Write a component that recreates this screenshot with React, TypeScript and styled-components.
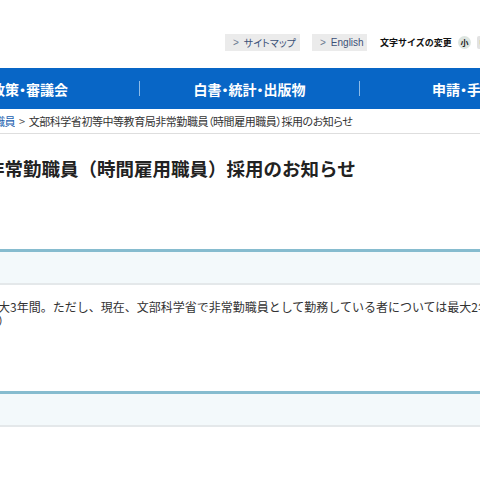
import styled, { createGlobalStyle } from "styled-components";

const GlobalStyle = createGlobalStyle`
    html, body {
        margin: 0;
        padding: 0;
        background: #ffffff;
        overflow: hidden;
    }
    body {
        font-family: "Noto Sans CJK JP", "Noto Sans", sans-serif;
        color: #333333;
    }
`;

// the page is wider than the window and starts left of it
const Frame = styled.div`
    width: 1100px;
    margin-left: -300px;
`;

const Header = styled.header`
    display: flex;
    align-items: center;
    height: 68px;
    box-sizing: border-box;
    padding: 34px 0 17px 525px;
`;

const HeadButton = styled.a<{ $width: number }>`
    display: flex;
    align-items: center;
    box-sizing: border-box;
    width: ${(p) => p.$width}px;
    height: 17px;
    padding-left: 8px;
    margin-right: 12px;
    background: #ebebeb;
    color: #3b5178;
    font-size: 10px;
    font-feature-settings: "palt";
    white-space: nowrap;
    text-decoration: none;
    font-family: "Liberation Sans", "Noto Sans CJK JP", sans-serif;
    flex-shrink: 0;
`;

const Chevron = styled.span`
    margin-right: 5px;
    color: #6b7a90;
`;

const SizeLabel = styled.span`
    margin-left: 1px;
    font-size: 9px;
    font-weight: bold;
    color: #111111;
    width: 70px;
    white-space: nowrap;
    flex-shrink: 0;
`;

const SizeButton = styled.span<{ $active?: boolean }>`
    display: flex;
    align-items: center;
    justify-content: center;
    width: 13px;
    height: 13px;
    margin-left: ${(p) => (p.$active ? 8 : 6)}px;
    border-radius: ${(p) => (p.$active ? "50%" : "2px")};
    background: ${(p) => (p.$active ? "#dde5e0" : "#e2e2e2")};
    font-size: 8px;
    font-weight: bold;
    color: #222222;
    flex-shrink: 0;
`;

const NavBar = styled.nav`
    display: flex;
    align-items: center;
    height: 41px;
    background: #0866c6;
`;

const NavItem = styled.a`
    display: flex;
    align-items: center;
    justify-content: center;
    width: 219px;
    height: 15px;
    flex-shrink: 0;
    color: #ffffff;
    font-size: 14px;
    font-weight: bold;
    font-feature-settings: "palt";
    white-space: nowrap;
    text-decoration: none;
    & + & {
        border-left: 1px solid #8dbbe8;
    }
`;

const Breadcrumb = styled.div`
    display: flex;
    align-items: center;
    height: 24px;
    border-bottom: 1px solid #dedede;
    font-size: 11px;
    font-feature-settings: "palt";
    letter-spacing: -0.45px;
    white-space: nowrap;
`;

const Trail = styled.div`
    display: flex;
    justify-content: flex-end;
    width: 315px;
    overflow: hidden;
    flex-shrink: 0;
`;

const Crumb = styled.a`
    color: #1b5fb0;
    text-decoration: none;
`;

const CrumbSep = styled.span`
    padding: 0 4px 0 4px;
    color: #555555;
`;

const Current = styled.span`
    color: #333333;
`;

const Title = styled.h1`
    margin: 22px 0 0;
    padding-left: 64px;
    font-size: 18.5px;
    line-height: 24px;
    font-weight: bold;
    color: #222222;
    white-space: nowrap;
`;

const SectionHead = styled.h2<{ $gap: number }>`
    margin: ${(p) => p.$gap}px 0 0;
    height: 31px;
    box-sizing: content-box;
    padding-left: 20px;
    border-top: 3px solid #86bccf;
    border-bottom: 2px solid #e4e8ea;
    background: #f3f9fb;
    font-size: 14px;
    line-height: 31px;
    color: #333333;
`;

const Body = styled.p`
    margin: 15px 0 0;
    padding-left: 226px;
    font-size: 12px;
    line-height: 14px;
    color: #333333;
    white-space: nowrap;
    text-spacing-trim: space-all;
`;

export default function App() {
    const navItems = ["報道・広報", "政策・審議会", "白書・統計・出版物", "申請・手続き", "文部科学省の紹介"];
    const trail = ["トップ", "教育", "初等中等教育局", "非常勤職員"];

    return (
        <>
            <GlobalStyle />
            <Frame>
                <Header>
                    <HeadButton $width={75}>
                        <Chevron>&gt;</Chevron>サイトマップ
                    </HeadButton>
                    <HeadButton $width={55}>
                        <Chevron>&gt;</Chevron>English
                    </HeadButton>
                    <SizeLabel>文字サイズの変更</SizeLabel>
                    <SizeButton $active>小</SizeButton>
                    <SizeButton>中</SizeButton>
                </Header>
                <NavBar>
                    {navItems.map((label) => (
                        <NavItem key={label}>{label}</NavItem>
                    ))}
                </NavBar>
                <Breadcrumb>
                    <Trail>
                        {trail.map((label, i) => (
                            <span key={label}>
                                {i > 0 && <CrumbSep>&gt;</CrumbSep>}
                                <Crumb>{label}</Crumb>
                            </span>
                        ))}
                    </Trail>
                    <CrumbSep>&gt;</CrumbSep>
                    <Current>文部科学省初等中等教育局非常勤職員（時間雇用職員）採用のお知らせ</Current>
                </Breadcrumb>
                <Title>文部科学省初等中等教育局非常勤職員（時間雇用職員）採用のお知らせ</Title>
                <SectionHead $gap={69}>勤務期間</SectionHead>
                <Body>
                    採用日から最大3年間。ただし、現在、文部科学省で非常勤職員として勤務している者については最大2年間とする。
                    <br />
                    （更新あり。）
                </Body>
                <SectionHead $gap={63}>勤務時間</SectionHead>
            </Frame>
        </>
    );
}
